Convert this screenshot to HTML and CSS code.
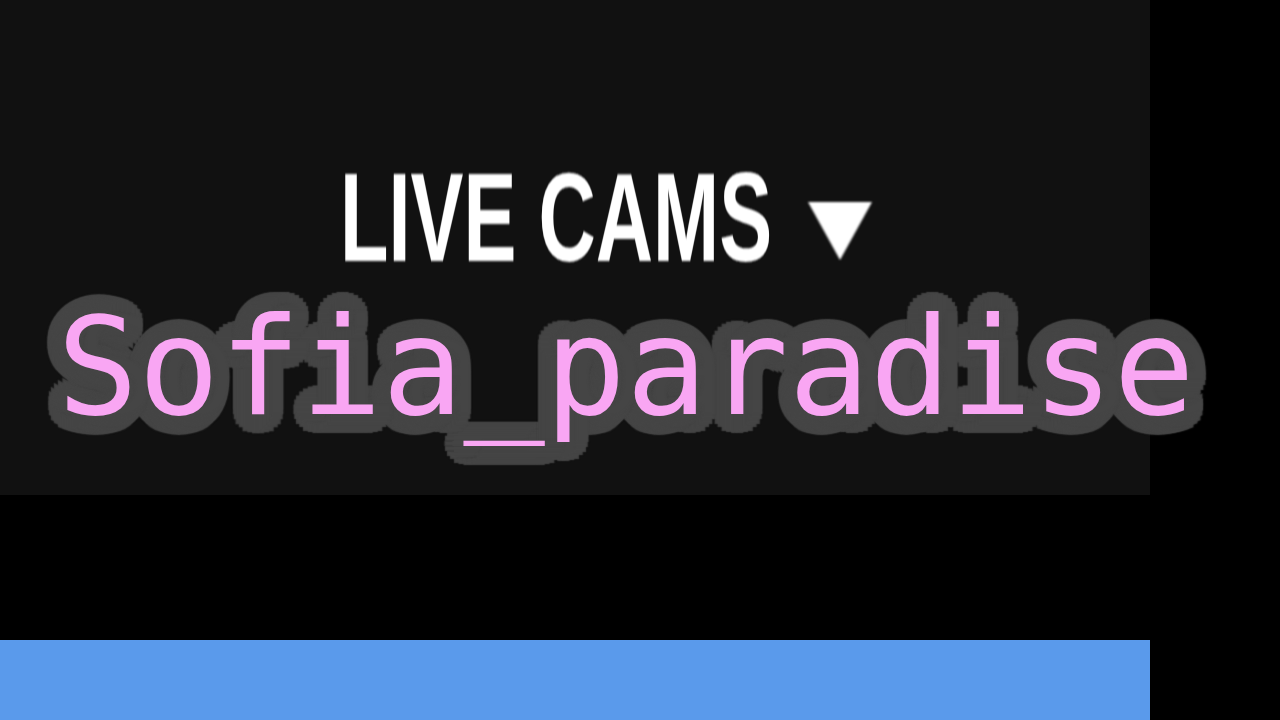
FILE: index.html
```html
<!DOCTYPE html>
<html lang="en">
<head>
<meta charset="utf-8">
<title>Live Cams</title>
<link rel="stylesheet" href="styles.css">
</head>
<body>
<div class="page">
  <header class="panel">
    <div class="menu">
      <span class="menu-label"><span class="menu-text">LIVE CAMS</span></span>
      <svg class="menu-caret" width="66" height="60" viewBox="0 0 66 60" aria-hidden="true">
        <polygon points="1,1 65,1 33,59" fill="#ffffff"/>
      </svg>
    </div>
    <div class="name">Sofia_paradise</div>
  </header>
  <div class="spacer"></div>
  <div class="bar"></div>
</div>
</body>
</html>
```

FILE: styles.css
```css
html, body {
  margin: 0;
  padding: 0;
  background: #000;
  width: 1280px;
  height: 720px;
  overflow: hidden;
}
.page {
  display: flex;
  flex-direction: column;
  width: 1150px;
}
.panel {
  background: #111111;
  height: 495px;
  box-sizing: border-box;
  padding-top: 155px;
  display: flex;
  flex-direction: column;
}
.menu {
  display: flex;
  align-items: baseline;
  padding-left: 340px;
  height: 124px;
  color: #ffffff;
}
.menu-label {
  display: inline-block;
  width: 467px;
  font-family: "Liberation Sans", sans-serif;
  font-weight: 700;
  font-size: 127px;
  line-height: 124px;
}
.menu-text {
  display: inline-block;
  white-space: nowrap;
  transform: scaleX(0.625);
  transform-origin: left center;
  filter: blur(0.8px);
}
.menu-caret {
  display: block;
  filter: blur(1px);
}
.name {
  font-family: "DejaVu Sans Mono", monospace;
  font-size: 135px;
  line-height: 160px;
  margin-top: 9px;
  color: #f9a6f3;
  padding-left: 57px;
  white-space: nowrap;
  text-shadow:
    19px 0 1.5px #454545, 18.4px 4.9px 1.5px #454545, 16.5px 9.5px 1.5px #454545, 13.4px 13.4px 1.5px #454545,
    9.5px 16.5px 1.5px #454545, 4.9px 18.4px 1.5px #454545, 0 19px 1.5px #454545, -4.9px 18.4px 1.5px #454545,
    -9.5px 16.5px 1.5px #454545, -13.4px 13.4px 1.5px #454545, -16.5px 9.5px 1.5px #454545, -18.4px 4.9px 1.5px #454545,
    -19px 0 1.5px #454545, -18.4px -4.9px 1.5px #454545, -16.5px -9.5px 1.5px #454545, -13.4px -13.4px 1.5px #454545,
    -9.5px -16.5px 1.5px #454545, -4.9px -18.4px 1.5px #454545, 0 -19px 1.5px #454545, 4.9px -18.4px 1.5px #454545,
    9.5px -16.5px 1.5px #454545, 13.4px -13.4px 1.5px #454545, 16.5px -9.5px 1.5px #454545, 18.4px -4.9px 1.5px #454545,
    11px 0 0 #454545, 9.5px 5.5px 0 #454545, 5.5px 9.5px 0 #454545, 0 11px 0 #454545,
    -5.5px 9.5px 0 #454545, -9.5px 5.5px 0 #454545, -11px 0 0 #454545, -9.5px -5.5px 0 #454545,
    -5.5px -9.5px 0 #454545, 0 -11px 0 #454545, 5.5px -9.5px 0 #454545, 9.5px -5.5px 0 #454545,
    4px 0 0 #454545, -4px 0 0 #454545, 0 4px 0 #454545, 0 -4px 0 #454545;
}
.spacer {
  height: 145px;
}
.bar {
  height: 80px;
  background: #5a9aeb;
}
```
